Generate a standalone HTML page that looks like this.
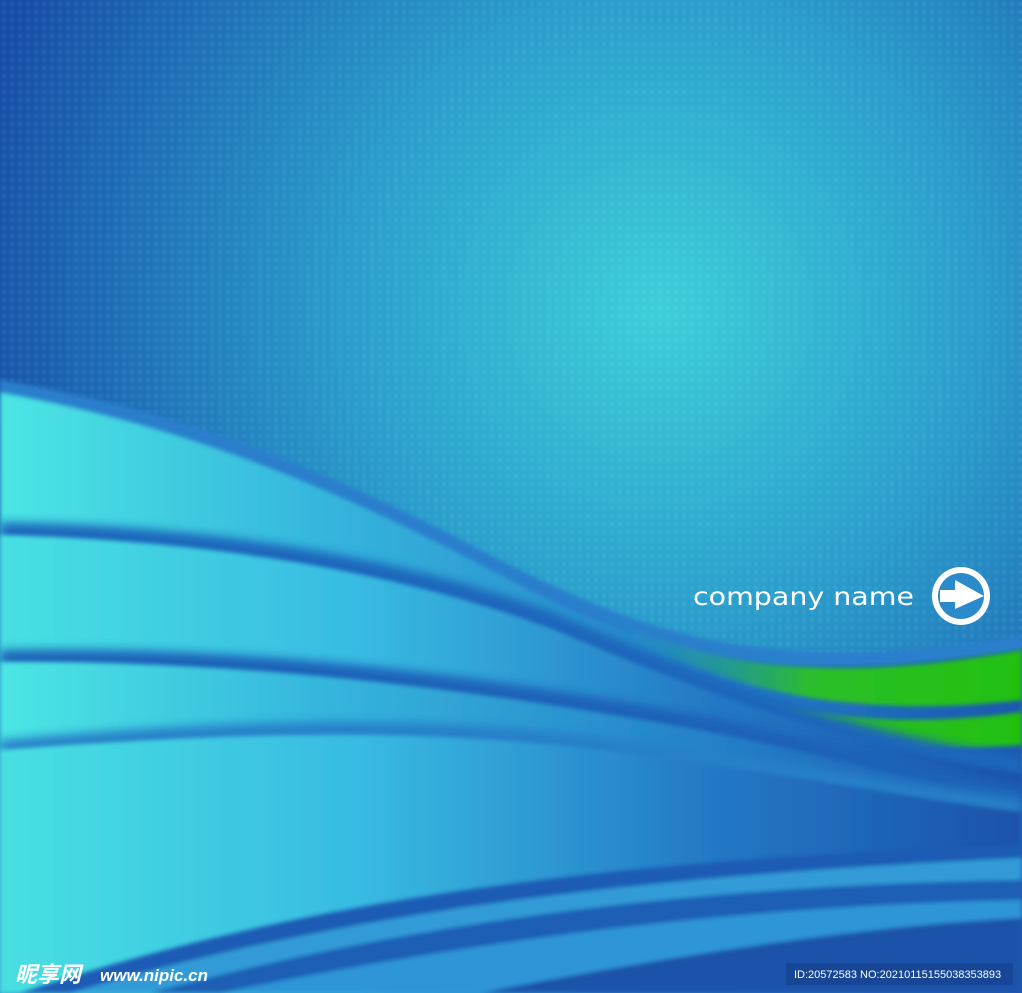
<!DOCTYPE html>
<html><head><meta charset="utf-8"><style>
html,body{margin:0;padding:0;width:1022px;height:993px;overflow:hidden;background:#1b5cae}
svg{display:block;overflow:hidden;position:absolute;left:0;top:0}
</style></head><body>
<svg width="1022" height="993" viewBox="0 0 1022 993" xmlns="http://www.w3.org/2000/svg">
<defs>
<radialGradient id="bg" cx="660" cy="310" r="700" gradientUnits="userSpaceOnUse">
<stop offset="0" stop-color="#3ccfd9"/><stop offset="0.45" stop-color="#2a9dcc"/><stop offset="1" stop-color="#174fa8"/>
</radialGradient>
<pattern id="dots" width="8" height="8" patternUnits="userSpaceOnUse"><circle cx="4" cy="4" r="2.2" fill="#ffffff" fill-opacity="0.06"/></pattern>
<linearGradient id="w" x1="0" y1="0" x2="1022" y2="0" gradientUnits="userSpaceOnUse">
<stop offset="0" stop-color="#4ce6e4"/><stop offset="0.3" stop-color="#36b8de"/><stop offset="0.7" stop-color="#2580c8"/><stop offset="1" stop-color="#1a58b0"/>
</linearGradient>
<linearGradient id="w2" x1="0" y1="0" x2="1022" y2="0" gradientUnits="userSpaceOnUse">
<stop offset="0" stop-color="#48e0e2"/><stop offset="0.35" stop-color="#38bbe2"/><stop offset="0.7" stop-color="#2478c4"/><stop offset="1" stop-color="#1a52aa"/>
</linearGradient>
<linearGradient id="g" x1="600" y1="0" x2="1022" y2="0" gradientUnits="userSpaceOnUse">
<stop offset="0" stop-color="#1a8fd0" stop-opacity="0"/><stop offset="0.5" stop-color="#2bbf2a"/><stop offset="1" stop-color="#23c010"/>
</linearGradient>
<filter id="b" filterUnits="userSpaceOnUse" x="0" y="0" width="1022" height="993"><feGaussianBlur stdDeviation="5" edgeMode="duplicate"/></filter>
<filter id="b2" filterUnits="userSpaceOnUse" x="0" y="0" width="1022" height="993"><feGaussianBlur stdDeviation="2" edgeMode="duplicate"/></filter>
</defs>
<rect width="1022" height="993" fill="url(#bg)"/>
<rect width="1022" height="993" fill="url(#dots)"/>
<g filter="url(#b2)">
<path d="M0 380 C180 410 330 470 500 560 C640 630 760 680 1022 636 L1022 993 L0 993Z" fill="#2a7fcc"/>
<path d="M0 393 C180 425 330 485 500 575 C640 650 760 690 1022 650 L1022 993 L0 993Z" fill="url(#w)"/>
</g>
<path d="M580 600 C680 660 800 690 1022 650 L1022 700 C850 720 720 690 600 625Z" fill="url(#g)" filter="url(#b2)"/>
<path d="M560 610 C680 690 820 740 1022 712 L1022 745 C820 760 700 720 580 640Z" fill="url(#g)" filter="url(#b2)"/>
<path d="M0 522 C200 525 400 555 560 615 C700 675 860 735 1022 757 L1022 993 L0 993Z" fill="#1f66bb" filter="url(#b)"/>
<path d="M0 535 C200 540 400 570 560 632 C700 692 860 750 1022 773 L1022 993 L0 993Z" fill="url(#w2)" filter="url(#b2)"/>
<path d="M0 650 C250 645 480 675 700 715 C850 745 950 775 1022 786 L1022 993 L0 993Z" fill="#1d62b8" filter="url(#b)"/>
<path d="M0 662 C250 660 480 690 700 730 C850 760 950 790 1022 801 L1022 993 L0 993Z" fill="url(#w)" filter="url(#b2)"/>
<path d="M0 740 C200 722 400 712 600 737 C800 762 920 787 1022 798 L1022 993 L0 993Z" fill="#2580c8" filter="url(#b)"/>
<path d="M0 750 C200 735 400 725 600 750 C800 775 920 800 1022 812 L1022 993 L0 993Z" fill="url(#w2)" filter="url(#b2)"/>
<g filter="url(#b2)">
<path d="M20 993 C300 900 600 860 1022 845 L1022 993Z" fill="#1c5bb4"/>
<path d="M70 993 C350 910 650 875 1022 858 L1022 993Z" fill="#36a2da" opacity="0.9"/>
<path d="M150 993 C420 920 700 885 1022 880 L1022 993Z" fill="#1d5eb5"/>
<path d="M220 993 C500 935 760 905 1022 900 L1022 993Z" fill="#2f95d6"/>
<path d="M480 993 C700 950 880 925 1022 918 L1022 993Z" fill="#1a52aa"/>
</g>
<text x="693" y="605" font-family="'DejaVu Sans','Liberation Sans',sans-serif" font-size="25" fill="#fff" textLength="221" lengthAdjust="spacingAndGlyphs">company name</text>
<circle cx="961" cy="596" r="29" fill="#fff"/>
<circle cx="961" cy="596" r="23" fill="#2b8acb"/>
<path d="M940 590 L955 590 L955 580 L984 596 L955 609 L955 602 L940 602Z" fill="#fff"/>
<text x="15" y="982" font-family="'Liberation Sans','Noto Sans CJK SC',sans-serif" font-size="22" font-weight="bold" font-style="italic" fill="#fff">昵享网</text>
<text x="100" y="981" font-family="'Liberation Sans',sans-serif" font-size="17" font-weight="bold" font-style="italic" fill="#fff">www.nipic.cn</text>
<rect x="786" y="963" width="227" height="22" fill="#14418c" opacity="0.7"/>
<text x="794" y="978" font-family="'Liberation Sans',sans-serif" font-size="11" fill="#fff">ID:20572583 NO:20210115155038353893</text>
</svg>
</body></html>
